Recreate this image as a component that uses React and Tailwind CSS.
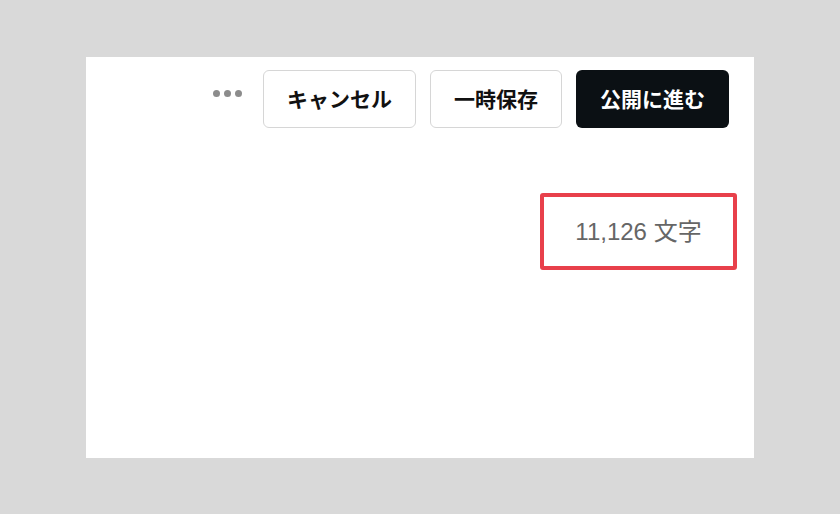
export default function App() {
  return (
    <div className="w-[840px] h-[514px] bg-[#d9d9d9] pt-[57px] pl-[86px]" style={{ fontFamily: '"Noto Sans CJK JP", "Noto Sans", sans-serif' }}>
      <div className="w-[668px] h-[401px] bg-white flex flex-col">
        <div className="flex items-center justify-end pt-[13px] pr-[25px]">
          <div className="flex items-center gap-[4px] mr-[21px] mb-[12px]">
            <span className="w-[7px] h-[7px] rounded-full bg-[#8c8c8c]" />
            <span className="w-[7px] h-[7px] rounded-full bg-[#8c8c8c]" />
            <span className="w-[7px] h-[7px] rounded-full bg-[#8c8c8c]" />
          </div>
          <button className="w-[153px] h-[58px] rounded-[6px] border border-[#d6d6d6] bg-white text-[21px] font-bold text-[#111]">キャンセル</button>
          <button className="w-[132px] h-[58px] ml-[14px] rounded-[6px] border border-[#d6d6d6] bg-white text-[21px] font-bold text-[#111]">一時保存</button>
          <button className="w-[153px] h-[58px] ml-[14px] rounded-[6px] bg-[#0b1014] text-[21px] font-bold text-white">公開に進む</button>
        </div>
        <div className="flex justify-end pr-[17px] mt-[65px]">
          <div className="w-[197px] h-[77px] border-[4px] border-[#e8404b] rounded-[3px] flex items-center justify-center text-[24px] text-[#666]" style={{ fontFamily: '"Liberation Sans", "Noto Sans CJK JP", sans-serif' }}>
            11,126 文字
          </div>
        </div>
      </div>
    </div>
  );
}
